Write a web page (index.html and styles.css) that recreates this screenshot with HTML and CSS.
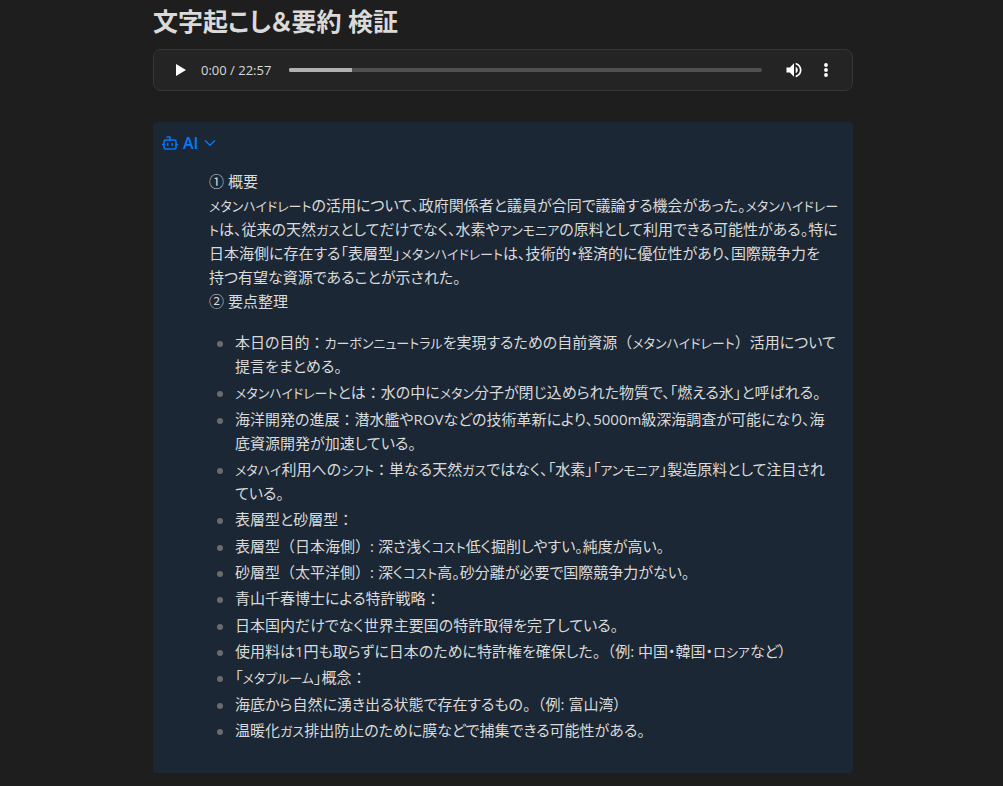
FILE: index.html
```
<!DOCTYPE html>
<html lang="ja">
<head>
<meta charset="utf-8">
<meta name="viewport" content="width=device-width, initial-scale=1">
<title>文字起こし＆要約 検証</title>
<link rel="stylesheet" href="styles.css">
</head>
<body>
<main class="note">
  <h1 class="title">文字起こし＆要約 検証</h1>
  <div class="player">
    <button class="icon-button" type="button" aria-label="再生">
      <svg width="24" height="24" viewBox="0 0 24 24" fill="currentColor"><path d="M8 6v12l10-6z"/></svg>
    </button>
    <span class="time">0:00 / 22:57</span>
    <input class="seek" type="range" min="0" max="1377" value="0" aria-label="再生位置">
    <button class="icon-button" type="button" aria-label="音量">
      <svg width="20" height="20" viewBox="0 0 24 24" fill="currentColor"><path d="M3 9v6h4l5 5V4L7 9H3z"/><path d="M14 7.970v8.050c1.480-.73 2.500-2.250 2.500-4.020 0-1.770-1.020-3.290-2.500-4.030z"/><path d="M14 3.230v2.060c2.890.86 5 3.540 5 6.710s-2.110 5.850-5 6.710v2.060c4.010-.91 7-4.490 7-8.770s-2.990-7.860-7-8.770z"/></svg>
    </button>
    <button class="icon-button" type="button" aria-label="その他">
      <svg width="20" height="20" viewBox="0 0 24 24" fill="currentColor"><circle cx="12" cy="6" r="2.300"/><circle cx="12" cy="12" r="2.300"/><circle cx="12" cy="18" r="2.300"/></svg>
    </button>
  </div>
  <section class="callout">
    <button class="callout-title" type="button" aria-expanded="true">
      <svg width="18" height="18" viewBox="0 0 24 24" fill="none" stroke="currentColor" stroke-width="2" stroke-linecap="round" stroke-linejoin="round"><path d="M12 8V4H8"/><rect width="16" height="12" x="4" y="8" rx="2"/><path d="M2 14h2M20 14h2M15 13v2M9 13v2"/></svg>
      <span>AI</span>
      <svg width="16" height="16" viewBox="0 0 24 24" fill="none" stroke="currentColor" stroke-width="2" stroke-linecap="round" stroke-linejoin="round"><path d="M5 8.500l7 7 7-7"/></svg>
    </button>
    <div class="callout-content">
      <p class="summary">① 概要<br><span class="kana">メタンハイドレート</span>の活用について、政府関係者と議員が合同で議論する機会があった。<span class="kana">メタンハイドレー<br>ト</span>は、従来の天然<span class="kana">ガス</span>としてだけでなく、水素や<span class="kana">アンモニア</span>の原料として利用できる可能性がある。特に<br>日本海側に存在する「表層型」<span class="kana">メタンハイドレート</span>は、技術的・経済的に優位性があり、国際競争力を<br>持つ有望な資源であることが示された。<br>② 要点整理</p>
      <ul class="points">
        <li>本日の目的<span class="wide">：</span><span class="kana">カーボンニュートラル</span>を実現するための自前資源<span class="wide">（</span><span class="kana">メタンハイドレート</span><span class="wide">）</span>活用について<br>提言をまとめる。</li>
        <li><span class="kana">メタンハイドレート</span>とは<span class="wide">：</span>水の中に<span class="kana">メタン</span>分子が閉じ込められた物質で、「燃える氷」と呼ばれる。</li>
        <li>海洋開発の進展<span class="wide">：</span>潜水艦やROVなどの技術革新により、5000m級深海調査が可能になり、海<br>底資源開発が加速している。</li>
        <li><span class="kana">メタハイ</span>利用への<span class="kana">シフト</span><span class="wide">：</span>単なる天然<span class="kana">ガス</span>ではなく、「水素」「<span class="kana">アンモニア</span>」製造原料として注目され<br>ている。</li>
        <li>表層型と砂層型<span class="wide">：</span></li>
        <li>表層型<span class="wide">（</span>日本海側<span class="wide">）</span>: 深さ浅く<span class="kana">コスト</span>低く掘削しやすい。純度が高い。</li>
        <li>砂層型<span class="wide">（</span>太平洋側<span class="wide">）</span>: 深く<span class="kana">コスト</span>高。砂分離が必要で国際競争力がない。</li>
        <li>青山千春博士による特許戦略<span class="wide">：</span></li>
        <li>日本国内だけでなく世界主要国の特許取得を完了している。</li>
        <li>使用料は1円も取らずに日本のために特許権を確保した。<span class="wide">（</span>例: 中国・韓国・<span class="kana">ロシア</span>など）</li>
        <li>「<span class="kana">メタプルーム</span>」概念<span class="wide">：</span></li>
        <li>海底から自然に湧き出る状態で存在するもの。<span class="wide">（</span>例: 富山湾）</li>
        <li>温暖化<span class="kana">ガス</span>排出防止のために膜などで捕集できる可能性がある。</li>
      </ul>
    </div>
  </section>
</main>
</body>
</html>
```
FILE: styles.css
```
* { box-sizing: border-box; }

body {
  margin: 0;
  background: #1e1e1e;
  color: #dadada;
  font-family: "Open Sans", "Noto Sans CJK JP", sans-serif;
  font-size: 15px;
  line-height: 24px;
  font-feature-settings: "palt";
  text-spacing-trim: space-all;
}

button {
  padding: 0;
  border: 0;
  background: none;
  color: inherit;
  font: inherit;
}

svg { display: block; }

/* Katakana words are set a little smaller than the kanji around them. */
.kana {
  font-size: 13px;
  line-height: 1;
}

/* Full-width colons and brackets keep their whole cell. */
.wide { font-feature-settings: "palt" 0; }

.note { padding: 3px 150px 13px 153px; }

.title {
  margin: 0 0 10px;
  font-size: 25px;
  font-weight: 600;
  line-height: 36px;
}

.player {
  display: flex;
  align-items: center;
  height: 42px;
  padding: 0 14px;
  border: 1px solid #363636;
  border-radius: 8px;
  background: #242424;
}

.icon-button {
  display: grid;
  place-items: center;
  width: 24px;
  height: 32px;
  color: #fff;
}

.icon-button + .icon-button { margin-left: 8px; }

.time {
  margin: 0 18px 0 9px;
  font-size: 13px;
  white-space: nowrap;
}

.seek {
  flex: 1;
  min-width: 0;
  height: 4px;
  margin: 0 20px 0 0;
  border-radius: 2px;
  appearance: none;
  background: linear-gradient(90deg, #b1b1b1 63px, #505050 63px);
}

.seek::-webkit-slider-thumb {
  appearance: none;
  width: 4px;
  height: 4px;
  border-radius: 2px;
  background: #b1b1b1;
}

.callout {
  margin-top: 31px;
  padding: 9px 12px 31px 8px;
  border-radius: 4px;
  background: #1b2734;
}

.callout-title {
  display: flex;
  align-items: center;
  gap: 4px;
  color: #027aff;
  font-size: 16px;
  font-weight: 600;
  line-height: 24px;
}

.callout-content { padding-left: 48px; }

.summary { margin: 14px 0 17px; white-space: nowrap; }

.points {
  margin: 0;
  padding-left: 26px;
  list-style: none;
  white-space: nowrap;
}

.points li { position: relative; margin-top: 2px; }
.points li:first-child { margin-top: 0; }
.points li:nth-child(3n) { margin-top: 3px; }

.points li::before {
  content: "";
  position: absolute;
  top: 11px;
  left: -18px;
  width: 6px;
  height: 6px;
  border-radius: 50%;
  background: #6b6b6b;
}
```
